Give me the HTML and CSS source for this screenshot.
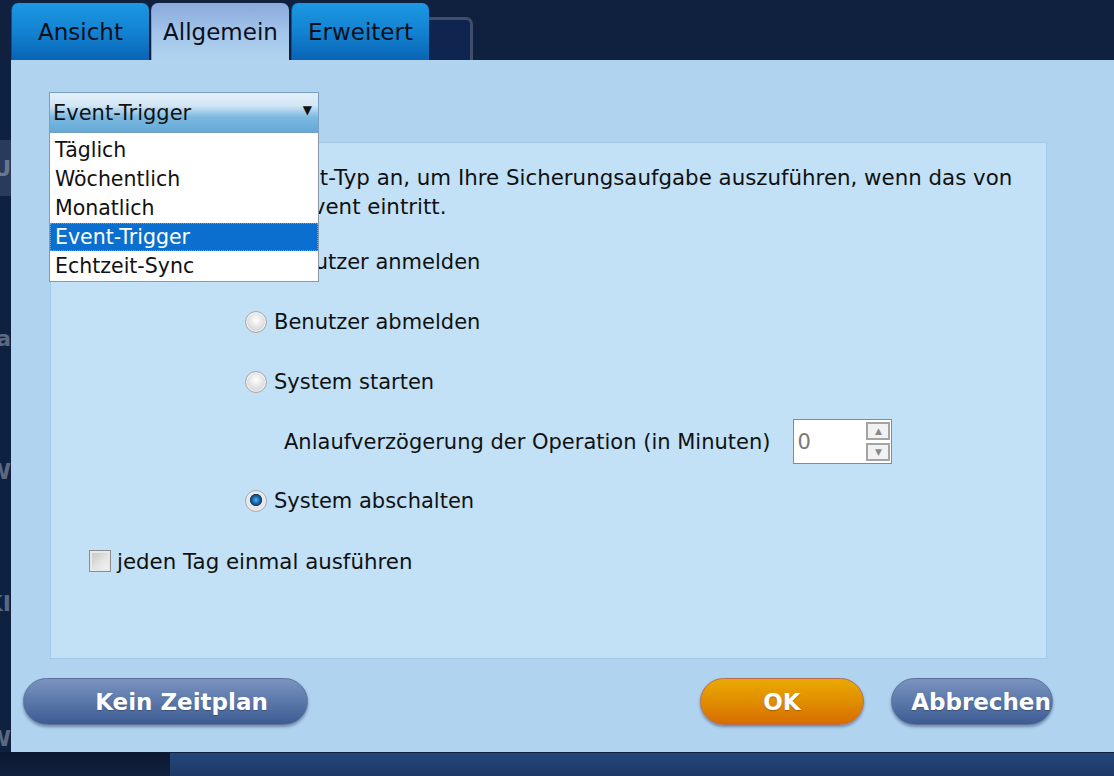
FILE: index.html
```html
<!DOCTYPE html>
<html lang="de">
<head>
<meta charset="utf-8">
<title>Zeitplan</title>
<link rel="stylesheet" href="styles.css">
</head>
<body>
<div class="screen">
  <div class="top">
    <div class="edge"></div>
    <div class="tab">Ansicht</div>
    <div class="tab active">Allgemein</div>
    <div class="tab">Erweitert</div>
    <div class="ghost"></div>
  </div>
  <div class="middle">
    <div class="edge-col">
      <div class="bg-box">U</div>
      <div class="bg-txt t1">Sa</div>
      <div class="bg-txt t2">W</div>
      <div class="bg-txt t3">KI</div>
      <div class="bg-txt t4">W</div>
    </div>
    <div class="dialog">
      <div class="select">
        <div class="select-head">
          <span>Event-Trigger</span>
          <span class="arrow">&#9660;</span>
        </div>
        <ul class="select-list">
          <li>Täglich</li>
          <li>Wöchentlich</li>
          <li>Monatlich</li>
          <li class="sel">Event-Trigger</li>
          <li>Echtzeit-Sync</li>
        </ul>
      </div>
      <div class="panel">
        <p class="desc">Geben Sie einen Event-Typ an, um Ihre Sicherungsaufgabe auszuführen, wenn das von<br>Ihnen vorgegebene Event eintritt.</p>
        <div class="row radio-row"><span class="radio"></span><span>Benutzer anmelden</span></div>
        <div class="row radio-row"><span class="radio"></span><span>Benutzer abmelden</span></div>
        <div class="row radio-row"><span class="radio"></span><span>System starten</span></div>
        <div class="row delay-row">
          <span>Anlaufverzögerung der Operation (in Minuten)</span>
          <div class="spinner">
            <span class="spin-val">0</span>
            <div class="spin-btns">
              <span class="spin-btn">&#9650;</span>
              <span class="spin-btn">&#9660;</span>
            </div>
          </div>
        </div>
        <div class="row radio-row"><span class="radio checked"></span><span>System abschalten</span></div>
        <div class="row check-row"><span class="check"></span><span>jeden Tag einmal ausführen</span></div>
      </div>
      <div class="buttons">
        <div class="btn blue wide">Kein Zeitplan</div>
        <div class="btn-group">
          <div class="btn orange">OK</div>
          <div class="btn blue cancel">Abbrechen</div>
        </div>
      </div>
    </div>
  </div>
  <div class="bottom">
    <div class="b-left"></div>
    <div class="b-right"></div>
  </div>
</div>
</body>
</html>
```

FILE: styles.css
```css
* { box-sizing: border-box; }
html, body { margin: 0; padding: 0; }
body {
  background: #0f2141;
  font-family: "DejaVu Sans", Verdana, sans-serif;
  color: #111;
}
.screen {
  width: 1114px;
  height: 776px;
  display: flex;
  flex-direction: column;
  overflow: hidden;
  background: #10213f;
}
.top {
  height: 60px;
  display: flex;
  align-items: flex-end;
  gap: 2px;
  background: #0f213f;
}
.edge { width: 9px; }
.tab {
  width: 138px;
  height: 57px;
  border-radius: 7px 7px 0 0;
  display: flex;
  align-items: center;
  justify-content: center;
  font-size: 23px;
  color: #0a0f1a;
  background: linear-gradient(#1d98e2 0%, #1283d2 50%, #0a64b4 100%);
  border-left: 1px solid #0b4f90;
  position: relative;
  z-index: 2;
}
.tab:first-of-type { width: 137px; }
.tab.active {
  background: linear-gradient(#8ba9dc 0%, #a3c6eb 55%, #b0d4ef 100%);
  border-left: 1px solid #7e9ccc;
}
.ghost {
  width: 60px;
  height: 43px;
  margin-left: -18px;
  border: 3px solid #3e4e6c;
  border-bottom: none;
  border-radius: 0 7px 0 0;
  background: #102450;
  z-index: 1;
}
.middle {
  height: 692px;
  display: flex;
}
.edge-col {
  width: 11px;
  display: flex;
  flex-direction: column;
  align-items: flex-end;
  overflow: hidden;
  background: #0f2140;
  color: #5c6782;
  font-weight: bold;
  font-size: 22px;
}
.bg-box {
  width: 11px;
  height: 62px;
  margin-top: 80px;
  background: #2a3a5a;
  display: flex;
  align-items: center;
  justify-content: flex-end;
  color: #6a7590;
  overflow: hidden;
}
.bg-txt { white-space: nowrap; line-height: 26px; }
.t1 { margin-top: 130px; }
.t2 { margin-top: 107px; }
.t3 { margin-top: 106px; }
.t4 { margin-top: 109px; }
.dialog {
  flex: 1;
  background: #b0d4ef;
  padding: 32px 67px 0 38px;
  display: flex;
  flex-direction: column;
}
.select {
  width: 270px;
  position: relative;
  z-index: 5;
}
.select-head {
  height: 41px;
  border: 1px solid #7b9dc2;
  background: linear-gradient(#e4f0f9 0%, #d2e6f5 32%, #7cb9e0 62%, #64aad8 100%);
  display: flex;
  align-items: center;
  justify-content: space-between;
  padding: 0 6px 0 3px;
  font-size: 21px;
}
.arrow { font-size: 12px; margin-top: -6px; }
.select-list {
  position: absolute;
  top: 100%;
  left: 0;
  width: 270px;
  margin: 0;
  padding: 3px 0 0 0;
  list-style: none;
  background: #fff;
  border: 1px solid #8a98a8;
  border-top: none;
  height: 149px;
}
.select-list li {
  height: 29px;
  line-height: 29px;
  font-size: 20.5px;
  padding-left: 5px;
}
.select-list li.sel {
  background: #0b6fcf;
  color: #fff;
  height: 28px;
  line-height: 28px;
  margin-bottom: 1px;
  outline: 1px dotted #6aa0d8;
  outline-offset: -1px;
}
.panel {
  margin: 9px 0 0 1px;
  height: 517px;
  background: #c2e1f7;
  border: 1px solid #a4c9e6;
  padding: 20px 20px 0 38px;
  display: flex;
  flex-direction: column;
  font-size: 21px;
}
.desc {
  margin: 0 0 11px -4px;
  line-height: 29px;
  font-size: 21.35px;
  white-space: nowrap;
}
.row {
  height: 60px;
  display: flex;
  align-items: center;
}
.radio-row { padding-left: 156px; gap: 7px; }
.delay-row { padding-left: 195px; gap: 21px; height: 59px; }
.check-row { padding-left: 0; gap: 6px; font-size: 21.35px; }
.radio {
  width: 22px;
  height: 22px;
  border-radius: 50%;
  border: 1px solid #a8a8a8;
  background: radial-gradient(circle at 50% 40%, #ffffff 0%, #e4e4e4 45%, #c8c8c8 100%);
  box-shadow: inset 0 0 0 1px #f4f4f4;
  flex: none;
}
.radio.checked {
  background: radial-gradient(circle at 50% 45%, #5ab0ea 0%, #1b6db0 22%, #0d3f70 38%, #eaeaea 44%, #d2d2d2 100%);
}
.check {
  width: 22px;
  height: 22px;
  border: 1px solid #8c8c8c;
  background: linear-gradient(135deg, #c4c4c4 0%, #e6e6e6 60%, #f4f4f4 100%);
  box-shadow: inset 0 0 0 2px #e8e8e8;
  flex: none;
}
.spinner {
  width: 99px;
  height: 45px;
  background: #fff;
  border: 1px solid #8a8a8a;
  display: flex;
  align-items: center;
  justify-content: space-between;
  padding: 0 1px 0 3px;
  margin-left: 2px;
}
.spin-val { color: #7a7a7a; font-size: 21px; }
.spin-btns { display: flex; flex-direction: column; gap: 3px; }
.spin-btn {
  width: 24px;
  height: 18px;
  border: 2px solid #a4a4a4;
  background: #f2f2f2;
  color: #8a8a8a;
  font-size: 9px;
  display: flex;
  align-items: center;
  justify-content: center;
}
.buttons {
  margin: 19px -6px 0 -26px;
  display: flex;
  justify-content: space-between;
}
.btn-group { display: flex; gap: 27px; }
.btn {
  height: 47px;
  border-radius: 24px;
  display: flex;
  align-items: center;
  justify-content: center;
  font-weight: bold;
  font-size: 23px;
  color: #fff;
  white-space: nowrap;
  text-shadow: 0 1px 1px rgba(0,0,0,0.25);
  box-shadow: 0 2px 3px rgba(30,50,90,0.45);
}
.btn.blue {
  background: linear-gradient(#7b93c0 0%, #5a78aa 50%, #3d5c93 100%);
  border: 1px solid #5d7299;
}
.btn.wide { width: 285px; padding-left: 32px; }
.btn.cancel { width: 162px; padding-left: 18px; }
.btn.orange {
  width: 164px;
  background: linear-gradient(#eaa900 0%, #e08e00 50%, #d76c00 100%);
  border: 1px solid #b86c56;
}
.bottom {
  height: 24px;
  display: flex;
}
.b-left {
  width: 170px;
  background: linear-gradient(#0b1830, #10213d);
  border-top: 1px solid #0a1a33;
}
.b-right {
  flex: 1;
  background: linear-gradient(#24477c, #1c3866);
  border-top: 1px solid #0e2040;
}
```
